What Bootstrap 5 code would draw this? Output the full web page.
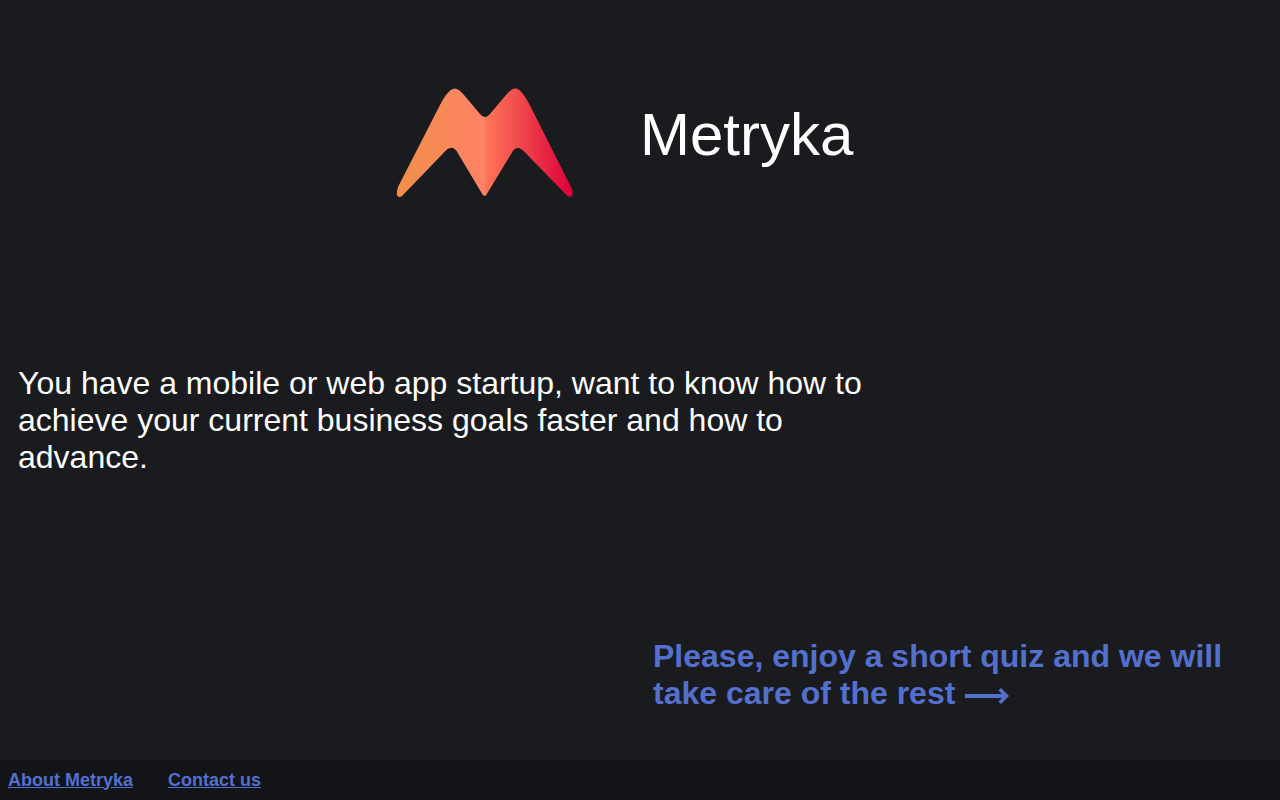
<!DOCTYPE html>
<html lang="en">
<head>
<meta charset="utf-8">
<meta name="viewport" content="width=device-width, initial-scale=1">
<title>Metryka</title>
<link href="https://cdn.jsdelivr.net/npm/bootstrap@5.3.0/dist/css/bootstrap.min.css" rel="stylesheet">
<style>
  body { background: #1a1b1e; color: #fff; font-family: "Liberation Sans", Arial, sans-serif; }
  a, a:hover { color: #5470cf; }
  main { padding: 88px 0 48px; }
  .brand-logo { width: 176px; height: 110px; margin-right: 67px; overflow: visible; }
  .brand-name { font-size: 60px; line-height: 69px; font-weight: 400; margin-top: 12px; }
  .intro, .quiz-link { font-size: 32px; line-height: 37px; }
  .intro { width: 70%; padding: 0 18px; }
  .quiz-link { padding: 0 13px; }
  .quiz-arrow { width: 46px; height: 16px; vertical-align: baseline; }
  .site-footer { background: #131417; height: 40px; padding: 0 8px; gap: 35px; font-size: 18px; line-height: 21px; }
</style>
</head>
<body class="d-flex flex-column min-vh-100">
<main class="flex-grow-1 d-flex flex-column justify-content-between">
  <header class="row g-0 mb-1">
    <div class="col-6 d-flex justify-content-end">
      <svg class="brand-logo" viewBox="0 0 176 110" role="img" aria-label="Metryka logo">
        <defs>
          <linearGradient id="leftWing"><stop offset="0" stop-color="#f1904a"/><stop offset="1" stop-color="#ff8266"/></linearGradient>
          <linearGradient id="rightWing"><stop offset="0" stop-color="#ff7759"/><stop offset="1" stop-color="#db0038"/></linearGradient>
        </defs>
        <path fill="url(#leftWing)" d="M88 29C86.500 29 85 28 83 26L67 7C60-1.500 56-2 49 7Q46 11 43 17L2 97C0 101-.5 104 0 107C1 109.500 4 109.500 6 107L45 66.500C51 59.500 56 56.500 60.500 64.500L84 104Q86 108 88 108Z"/>
        <path fill="url(#rightWing)" d="M88 29C89.500 29 91 28 93 26L109 7C116-1 120-2 126 6Q129 10 132.500 16.500L173.500 98C175.500 102 176.500 105 175 107.500C174 109.500 171.500 109 169 106.500L131 67.500C123 58.500 119 57 114 66L91 104Q89 108 88 108Z"/>
      </svg>
    </div>
    <div class="col-6"><h1 class="brand-name mb-0">Metryka</h1></div>
  </header>
  <p class="intro mb-0">You have a mobile or web app startup, want to know how to achieve your current business goals faster and how to advance.</p>
  <div class="row g-0 justify-content-end">
    <div class="col-6"><a href="#quiz" class="quiz-link d-block fw-bold text-decoration-none">Please, enjoy a short quiz and we will take care of the rest <svg class="quiz-arrow" viewBox="0 0 46 16" fill="currentColor" aria-hidden="true"><path d="M1 6H38L34.500 2.500L37 0L45 8L37 16L34.500 13.500L38 10H1Z"/></svg></a></div>
  </div>
</main>
<footer class="site-footer d-flex align-items-center fw-bold">
  <a href="#about">About Metryka</a>
  <a href="#contact">Contact us</a>
</footer>
<script src="https://cdn.jsdelivr.net/npm/bootstrap@5.3.0/dist/js/bootstrap.bundle.min.js"></script>
</body>
</html>
